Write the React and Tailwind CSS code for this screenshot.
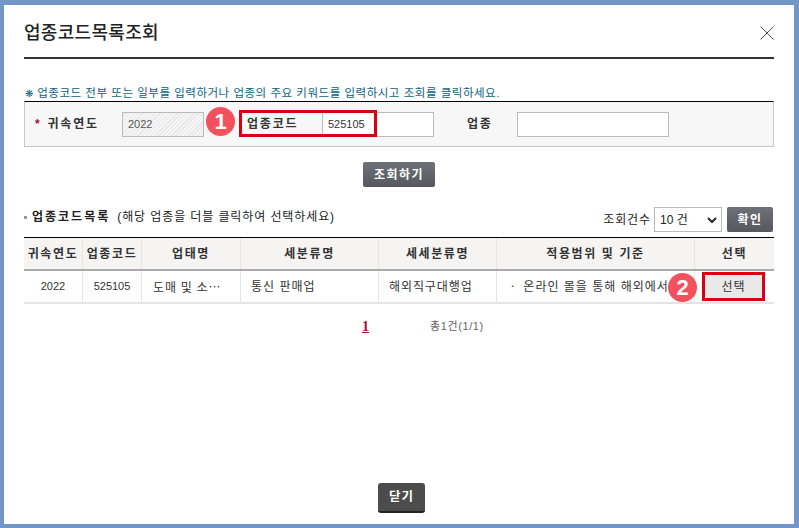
const FONT = "font-['Liberation_Sans','Noto_Sans_CJK_KR',sans-serif]";

const COLUMNS = [
  { label: "귀속연도", width: "w-[59px]" },
  { label: "업종코드", width: "w-[59px]" },
  { label: "업태명", width: "w-[99px]" },
  { label: "세분류명", width: "w-[138px]" },
  { label: "세세분류명", width: "w-[118px]" },
  { label: "적용범위 및 기준", width: "w-[198px]" },
  { label: "선택", width: "w-[79px]" },
];

const Badge = ({ n, className }) => (
  <span className={`absolute z-10 flex h-[29px] w-[29px] items-center justify-center rounded-full bg-[#f4515f] text-[22px] font-bold leading-none text-white ${className}`}>
    {n}
  </span>
);

const DarkButton = ({ children, className }) => (
  <button className={`flex items-center justify-center rounded-[2px] bg-gradient-to-b from-[#6e7278] to-[#55585f] text-[12px] font-bold tracking-[1.4px] text-white ${className}`}>
    {children}
  </button>
);

export default function App() {
  return (
    <div className={`h-[528px] w-[799px] overflow-hidden bg-[#7097c7] pb-[4px] pl-[4px] pr-[5px] pt-[5px] ${FONT}`}>
      <div className="relative flex h-[519px] flex-col bg-white px-[20px]">
        {/* title */}
        <div className="flex h-[52px] items-center justify-between border-b-2 border-[#333] box-content">
          <h1 className="pt-[4px] text-[18px] font-medium tracking-[0.3px] text-[#222]">업종코드목록조회</h1>
          <svg width="14" height="14" viewBox="0 0 14 14" className="mr-0 mt-[3px] text-[#555]">
            <path d="M0.5 0.5 L13.5 13.5 M13.5 0.5 L0.5 13.5" stroke="currentColor" strokeWidth="1" fill="none" />
          </svg>
        </div>

        {/* search */}
        <p className="mt-[26px] h-[16px] pl-px text-[11.5px] leading-[16px] tracking-[0.52px] text-[#0b5f7f]">
          <span className="text-[10px]">❋</span> 업종코드 전부 또는 일부를 입력하거나 업종의 주요 키워드를 입력하시고 조회를 클릭하세요.
        </p>
        <div className="relative flex h-[46px] items-center border border-t-black border-[#c8c8c8] bg-[#f7f7f7] pl-[10px] text-[12px] text-[#333]">
          <span className="w-[87px] font-bold tracking-[1.8px]">
            <span className="mr-[6px] text-[#a3123a]">*</span>귀속연도
          </span>
          <div className="flex h-[25px] w-[82px] items-center border border-[#bbb] bg-[repeating-linear-gradient(135deg,#f5f5f5_0,#f5f5f5_2px,#e6e6e6_2px,#e6e6e6_3px)] pl-[5px] text-[11px] text-[#555]">2022</div>
          <span className="ml-[43px] w-[75px] font-bold tracking-[1.8px]">업종코드</span>
          <div className="flex h-[25px] w-[112px] items-center border border-[#bbb] bg-white pl-[5px] text-[11px]">525105</div>
          <span className="ml-[33px] w-[50px] font-bold tracking-[1.8px]">업종</span>
          <div className="h-[25px] w-[152px] border border-[#bbb] bg-white" />

          {/* annotation */}
          <div className="absolute left-[214px] top-[8px] h-[27px] w-[138px] border-[3px] border-[#d90011]">
            <div className="ml-[80px] h-full w-px bg-[#bbb]" />
          </div>
          <Badge n="1" className="left-[181px] top-[5px]" />
        </div>

        <DarkButton className="mx-auto mt-[15px] h-[25px] w-[72px]">조회하기</DarkButton>

        {/* list header */}
        <div className="mt-[20px] flex h-[25px] items-center text-[12px] text-[#222]">
          <div className="mb-[5px] flex items-center">
            <span className="mr-[5px] h-[3px] w-[3px] bg-[#999]" />
            <span className="font-bold tracking-[2px]">업종코드목록</span>
            <span className="ml-[7px] tracking-[0.9px]">(해당 업종을 더블 클릭하여 선택하세요)</span>
          </div>
          <span className="ml-auto mr-[3px] tracking-[0.9px]">조회건수</span>
          <div className="flex h-[25px] w-[68px] items-center justify-between border border-[#bbb] bg-white pl-[5px] pr-[4px]">
            <span className="text-[12px]">10 건</span>
            <svg width="10" height="6" viewBox="0 0 10 6"><path d="M1 1 L5 5 L9 1" stroke="#222" strokeWidth="2" fill="none" /></svg>
          </div>
          <DarkButton className="ml-[5px] mr-px h-[25px] w-[46px]">확인</DarkButton>
        </div>

        {/* table */}
        <div className="mt-[5px] text-[12px] text-[#333]">
          <div className="flex h-[34px] border-b-2 border-t border-b-[#aaa] border-t-black bg-[#f5f4f3] font-bold tracking-[1.6px]">
            {COLUMNS.map((c) => (
              <div key={c.label} className={`flex shrink-0 items-center justify-center whitespace-nowrap border-r border-[#e6e6e6] last:border-r-0 ${c.width}`}>
                {c.label}
              </div>
            ))}
          </div>
          <div className="relative flex h-[33px] border-b-2 border-[#e4e4e4]">
            <div className="flex w-[59px] shrink-0 items-center justify-center border-r border-[#e6e6e6] text-[11px]">2022</div>
            <div className="flex w-[59px] shrink-0 items-center justify-center border-r border-[#e6e6e6] text-[11px]">525105</div>
            <div className="flex w-[99px] shrink-0 items-center border-r border-[#e6e6e6] pl-[11px] font-['Noto_Sans_CJK_KR',sans-serif] tracking-[1px]">도매 및 소…</div>
            <div className="flex w-[138px] shrink-0 items-center border-r border-[#e6e6e6] pl-[10px] tracking-[1px]">통신 판매업</div>
            <div className="flex w-[118px] shrink-0 items-center border-r border-[#e6e6e6] pl-[10px] tracking-[0.9px]">해외직구대행업</div>
            <div className="flex w-[198px] shrink-0 items-center overflow-hidden whitespace-nowrap border-r border-[#e6e6e6] pl-[10px] tracking-[1px]">ㆍ 온라인 몰을 통해 해외에서</div>
            <div className="flex w-[79px] shrink-0 items-center pl-[7px]">
              <div className="flex h-[29px] w-[63px] items-center justify-center border-[3px] border-[#d90011] bg-[#e9e9e9] text-[12px] tracking-[1px]">선택</div>
            </div>
            <Badge n="2" className="left-[644px] top-[2px]" />
          </div>
        </div>

        {/* paging */}
        <div className="mt-[13px] flex h-[18px] items-center text-[#666]">
          <span className="ml-[338px] font-['Liberation_Serif',serif] text-[14px] font-bold text-[#a3123a] underline">1</span>
          <span className="ml-[61px] text-[11px] tracking-[0.6px]">총1건(1/1)</span>
        </div>

        <button className="ml-[354px] mt-[148px] flex h-[30px] w-[47px] items-center justify-center rounded-[3px] border-b-2 border-[#222] bg-[#4c4c4c] text-[12.5px] font-bold tracking-[1px] text-white">
          닫기
        </button>
      </div>
    </div>
  );
}
